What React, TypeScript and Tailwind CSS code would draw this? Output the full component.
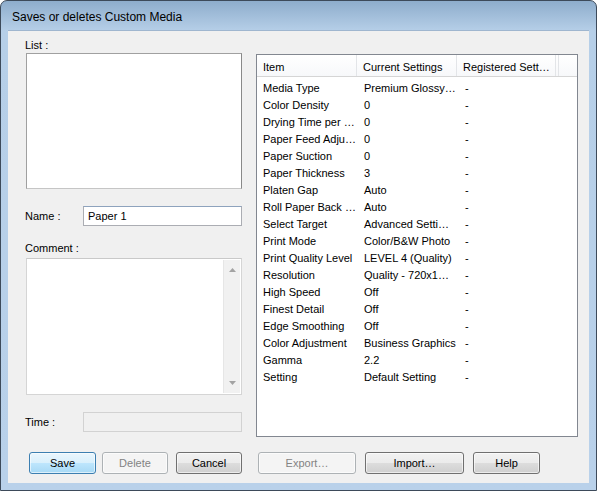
import React from 'react';

// Settings shown in the right-hand list view
const ROWS: [string, string][] = [
  ['Media Type', 'Premium Glossy…'],
  ['Color Density', '0'],
  ['Drying Time per …', '0'],
  ['Paper Feed Adju…', '0'],
  ['Paper Suction', '0'],
  ['Paper Thickness', '3'],
  ['Platen Gap', 'Auto'],
  ['Roll Paper Back …', 'Auto'],
  ['Select Target', 'Advanced Setti…'],
  ['Print Mode', 'Color/B&W Photo'],
  ['Print Quality Level', 'LEVEL 4 (Quality)'],
  ['Resolution', 'Quality - 720x1…'],
  ['High Speed', 'Off'],
  ['Finest Detail', 'Off'],
  ['Edge Smoothing', 'Off'],
  ['Color Adjustment', 'Business Graphics'],
  ['Gamma', '2.2'],
  ['Setting', 'Default Setting'],
];

type Variant = 'default' | 'normal' | 'disabled';

const WinButton = ({ label, variant = 'normal', className = '' }: { label: string; variant?: Variant; className?: string }) => {
  const styles: Record<Variant, string> = {
    default: 'border-[#3c7fb1] bg-[linear-gradient(#eaf6fd_0%,#d9f0fc_50%,#bee6fd_50%,#a7d9f5_100%)] text-black',
    normal: 'border-[#707070] bg-[linear-gradient(#f2f2f2_0%,#ebebeb_50%,#dddddd_50%,#cfcfcf_100%)] text-black',
    disabled: 'border-[#adb2b5] bg-[#f4f4f4] text-[#838383]',
  };
  return (
    <button className={`h-[22px] rounded-[3px] border text-[11px] leading-none shadow-[inset_0_0_0_1px_rgba(255,255,255,0.6)] ${styles[variant]} ${className}`}>
      {label}
    </button>
  );
};

const ArrowUp = () => (
  <svg width="7" height="4" viewBox="0 0 7 4"><path d="M0 4 L3.5 0 L7 4 Z" fill="#a3a3a3" /></svg>
);
const ArrowDown = () => (
  <svg width="7" height="4" viewBox="0 0 7 4"><path d="M0 0 L3.5 4 L7 0 Z" fill="#a3a3a3" /></svg>
);

export default function App() {
  return (
    <div className="w-[597px] h-[491px] flex flex-col rounded-t-[7px] border border-[#3d4a5a] bg-[linear-gradient(#8eadcc_0px,#b6cfe8_30px,#b9d1ea_100%)] font-['Liberation_Sans',Arial,sans-serif] text-black overflow-hidden">
      {/* Title bar */}
      <div className="h-[29px] flex items-center pl-[11px] pt-[2px] text-[12px]">Saves or deletes Custom Media</div>

      {/* Client area */}
      <div className="mx-[7px] mb-[7px] flex-1 flex flex-col bg-[#f0f0f0] border-t border-[#9fb6cf]">
        <div className="flex">
          {/* Left column */}
          <div className="ml-[17px] w-[217px] flex flex-col">
            <div className="h-[16px] mt-[6px] text-[11px] leading-[16px]">List :</div>
            <div className="ml-[1px] h-[136px] w-[216px] bg-white border border-[#a0a0a0] border-r-[#898989] border-b-[#c5c5c5]" />

            <div className="mt-[17px] flex items-center h-[20px]">
              <span className="w-[58px] text-[11px]">Name :</span>
              <div className="flex-1 h-[20px] bg-white border border-[#abadb3] border-t-[#8ea3bd] flex items-center pl-[4px] text-[11px]">Paper 1</div>
            </div>

            <div className="mt-[14px] h-[18px] text-[11px] leading-[17px]">Comment :</div>
            <div className="ml-[1px] h-[137px] w-[216px] bg-white border border-[#d5d5d5] border-t-[#c9c9c9] flex justify-end p-px">
              <div className="w-[17px] h-full bg-[#f1f1f1] border-l border-[#e6e6e6] flex flex-col items-center justify-between py-[8px]">
                <ArrowUp />
                <ArrowDown />
              </div>
            </div>

            <div className="mt-[17px] flex items-center h-[20px]">
              <span className="w-[58px] text-[11px]">Time :</span>
              <div className="flex-1 h-[20px] bg-[#f0f0f0] border border-[#d2d2d2]" />
            </div>
          </div>

          {/* Settings list view */}
          <div className="ml-[14px] mt-[23px] w-[322px] h-[383px] bg-white border border-[#828790] flex flex-col text-[11px]">
            <div className="h-[22px] flex bg-[linear-gradient(#ffffff,#f7f8fa)] border-b border-[#d5d5d5]">
              <div className="w-[100px] pl-[6px] pt-[3px] flex items-center border-r border-[#e3e5e8]">Item</div>
              <div className="w-[100px] pl-[6px] pt-[3px] flex items-center border-r border-[#e3e5e8]">Current Settings</div>
              <div className="w-[99px] pl-[6px] pt-[3px] flex items-center border-r border-[#e3e5e8]">Registered Sett…</div>
              <div className="w-[3px] border-r border-[#e3e5e8]" />
            </div>
            <div className="pt-[3px]">
              {ROWS.map(([item, value]) => (
                <div key={item} className="h-[17px] flex items-center">
                  <div className="w-[100px] pl-[6px] whitespace-nowrap overflow-hidden">{item}</div>
                  <div className="w-[100px] pl-[7px] whitespace-nowrap overflow-hidden">{value}</div>
                  <div className="w-[99px] pl-[8px]">-</div>
                </div>
              ))}
            </div>
          </div>
        </div>

        {/* Button row */}
        <div className="mt-[15px] flex">
          <WinButton label="Save" variant="default" className="ml-[21px] w-[67px]" />
          <WinButton label="Delete" variant="disabled" className="ml-[6px] w-[66px]" />
          <WinButton label="Cancel" className="ml-[8px] w-[66px]" />
          <WinButton label="Export…" variant="disabled" className="ml-[16px] w-[98px]" />
          <WinButton label="Import…" className="ml-[9px] w-[99px]" />
          <WinButton label="Help" className="ml-[9px] w-[67px]" />
        </div>
      </div>
    </div>
  );
}
